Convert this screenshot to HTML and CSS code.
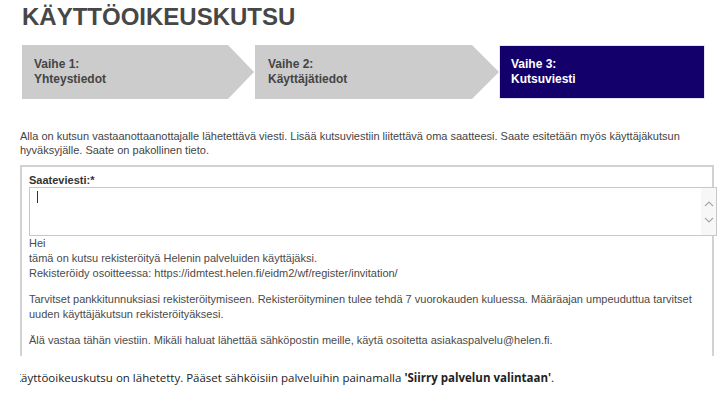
FILE: index.html
```html
<!DOCTYPE html>
<html lang="fi">
<head>
<meta charset="utf-8">
<title>Käyttöoikeuskutsu</title>
<link rel="stylesheet" href="styles.css">
</head>
<body>
<div class="page">
  <h1 class="title">KÄYTTÖOIKEUSKUTSU</h1>
  <div class="steps">
    <div class="step step-1"><span>Vaihe 1:</span><span>Yhteystiedot</span></div>
    <div class="step step-2"><span>Vaihe 2:</span><span>Käyttäjätiedot</span></div>
    <div class="step step-3 active"><span>Vaihe 3:</span><span>Kutsuviesti</span></div>
  </div>
  <p class="intro">Alla on kutsun vastaanottaanottajalle lähetettävä viesti. Lisää kutsuviestiin liitettävä oma saatteesi. Saate esitetään myös käyttäjäkutsun hyväksyjälle. Saate on pakollinen tieto.</p>
  <div class="box">
    <div class="label">Saateviesti:*</div>
    <div class="textarea">
      <span class="caret"></span>
      <div class="scroll">
        <svg width="10" height="6" viewBox="0 0 10 6"><path d="M1 5 L5 1 L9 5" fill="none" stroke="#a8a8a8" stroke-width="1.2"/></svg>
        <svg width="10" height="6" viewBox="0 0 10 6"><path d="M1 1 L5 5 L9 1" fill="none" stroke="#a8a8a8" stroke-width="1.2"/></svg>
      </div>
    </div>
    <div class="message">
      <p>Hei<br>tämä on kutsu rekisteröityä Helenin palveluiden käyttäjäksi.<br>Rekisteröidy osoitteessa: https://idmtest.helen.fi/eidm2/wf/register/invitation/</p>
      <p>Tarvitset pankkitunnuksiasi rekisteröitymiseen. Rekisteröityminen tulee tehdä 7 vuorokauden kuluessa. Määräajan umpeuduttua tarvitset uuden käyttäjäkutsun rekisteröityäksesi.</p>
      <p>Älä vastaa tähän viestiin. Mikäli haluat lähettää sähköpostin meille, käytä osoitetta asiakaspalvelu@helen.fi.</p>
    </div>
  </div>
  <div class="notice"><p>Käyttöoikeuskutsu on lähetetty. Pääset sähköisiin palveluihin painamalla <strong>'Siirry palvelun valintaan'</strong>.</p></div>
</div>
</body>
</html>
```
FILE: styles.css
```css
html, body {
  margin: 0;
  padding: 0;
  background: #fff;
}
body {
  font-family: "Liberation Sans", Arial, sans-serif;
  color: #444;
  overflow: hidden;
}
.page {
  width: 722px;
  height: 393px;
  overflow: hidden;
}
.title {
  margin: 3px 0 0 22px;
  font-size: 24px;
  line-height: 28px;
  font-weight: bold;
  color: #474747;
}
.steps {
  display: flex;
  margin: 14px 0 0 22px;
  height: 54px;
}
.step {
  display: flex;
  flex-direction: column;
  justify-content: center;
  box-sizing: border-box;
  padding-left: 12px;
  font-size: 12px;
  line-height: 15px;
  font-weight: bold;
  color: #444;
  background: #cccccc;
}
.step-1 {
  width: 232px;
  clip-path: polygon(0 0, calc(100% - 26px) 0, 100% 50%, calc(100% - 26px) 100%, 0 100%);
}
.step-2 {
  width: 244px;
  margin-left: 1px;
  padding-left: 13px;
  clip-path: polygon(0 0, calc(100% - 27px) 0, 100% 50%, calc(100% - 27px) 100%, 0 100%);
}
.step-3 {
  width: 206px;
  margin-left: 0;
  background: #14006b;
  color: #fff;
  border: 1px solid #e6e4ef;
  padding-left: 11px;
}
.intro {
  margin: 30px 0 0 20px;
  width: 680px;
  font-size: 11px;
  line-height: 14px;
  color: #444;
}
.box {
  margin: 8px 0 0 20px;
  width: 694px;
  height: 191px;
  box-sizing: border-box;
  border: 2px solid #d2d2d2;
  border-bottom: none;
  padding: 7px 0 0 7px;
}
.label {
  font-size: 11px;
  line-height: 13px;
  font-weight: bold;
  color: #333;
}
.textarea {
  display: flex;
  justify-content: space-between;
  width: 688px;
  height: 49px;
  box-sizing: border-box;
  border: 1px solid #c8c8c8;
  background: #fff;
}
.caret {
  width: 1px;
  height: 12px;
  background: #333;
  margin: 3px 0 0 7px;
}
.scroll {
  width: 15px;
  display: flex;
  flex-direction: column;
  align-items: center;
  justify-content: center;
  gap: 10px;
  background: #f7f7f7;
}
.message {
  font-size: 11px;
  line-height: 15px;
  color: #4a4a4a;
}
.message p {
  margin: 0 0 11px 0;
}
.notice {
  margin: 14px 0 0 20px;
  overflow: hidden;
}
.notice p {
  margin: 0 0 0 -6px;
  font-family: "Open Sans", "Noto Sans", sans-serif;
  font-size: 11.5px;
  line-height: 16px;
  color: #222;
  white-space: nowrap;
}
.notice strong {
  font-weight: bold;
}
```
